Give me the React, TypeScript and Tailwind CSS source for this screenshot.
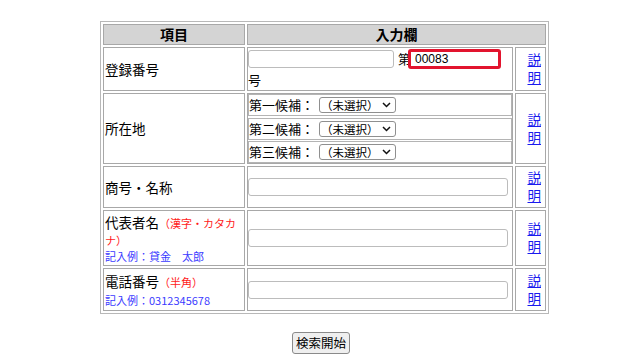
import React from "react";

const F = { fontFamily: '"Noto Sans CJK JP", "Noto Sans", sans-serif' };

function Chevron() {
  return (
    <svg width="9" height="6" viewBox="0 0 9 6" className="ml-auto">
      <path d="M1 1 L4.5 4.5 L8 1" fill="none" stroke="#111" strokeWidth="1.5" />
    </svg>
  );
}

function Pick({ label }: { label: string }) {
  return (
    <div className="flex items-center h-[22px] border border-[#b4b4b4]">
      <span className="text-[13px] leading-[18px] text-black w-[70px]">{label}</span>
      <span className="flex items-center w-[77px] h-[16px] border border-[#8f8f8f] rounded-[3px] bg-white pl-[1px] pr-[4px] text-[11.5px] leading-[14px] text-black">
        （未選択）
        <Chevron />
      </span>
    </div>
  );
}

function Link() {
  return (
    <td className="border border-[#a8a8a8] p-[1px] pr-[4px] text-right align-middle">
      <a href="#" className="inline-block w-[14px] text-[13.5px] leading-[18px] text-[#1a1aee] underline break-all">
        説明
      </a>
    </td>
  );
}

function TextBox() {
  return <div className="w-[260px] h-[18px] border border-[#bcbcbc] rounded-[3px] bg-white" />;
}

export default function App() {
  const td = "border border-[#a8a8a8] p-[1px] align-middle";
  const td2 = "border border-[#a8a8a8] py-[1px] pl-0 pr-[1px] align-middle";
  return (
    <div className="w-[640px] h-[359px] bg-white text-black" style={F}>
      <div className="pt-[21px] pl-[100px]">
        <table className="table-fixed border-separate border-spacing-[2px] border border-[#b8b8b8] w-[449px]">
          <colgroup>
            <col className="w-[142px]" />
            <col className="w-[266px]" />
            <col className="w-[31px]" />
          </colgroup>
          <thead>
            <tr>
              <th className="border border-[#a8a8a8] bg-[#d4d4d4] h-[21px] p-0 text-[14px] leading-[19px] font-bold text-center">項目</th>
              <th colSpan={2} className="border border-[#a8a8a8] bg-[#d4d4d4] h-[21px] p-0 text-[14px] leading-[19px] font-bold text-center">入力欄</th>
            </tr>
          </thead>
          <tbody>
            <tr className="h-[44px]">
              <td className={`${td} text-[13.5px]`}>登録番号</td>
              <td className={td2}>
                <div className="flex items-center h-[20px]">
                  <div className="w-[146px] h-[18px] border border-[#bcbcbc] rounded-[3px] bg-white" />
                  <span className="ml-[4px] text-[13px] leading-[18px]">第</span>
                  <div className="ml-[-3px] w-[93px] h-[20px] border-[3px] border-[#e2142e] rounded-[3px] bg-white flex items-center pl-[4px] text-[12px] font-['Liberation_Sans',sans-serif]">
                    00083
                  </div>
                </div>
                <div className="text-[13px] leading-[19px] mt-[1px]">号</div>
              </td>
              <Link />
            </tr>
            <tr className="h-[71px]">
              <td className={`${td} text-[13.5px]`}>所在地</td>
              <td className="border border-[#a8a8a8] p-0 align-middle">
                <div className="flex flex-col gap-[1.5px]">
                  <Pick label="第一候補：" />
                  <Pick label="第二候補：" />
                  <Pick label="第三候補：" />
                </div>
              </td>
              <Link />
            </tr>
            <tr className="h-[42px]">
              <td className={`${td} text-[13.5px]`}>商号・名称</td>
              <td className={td2}>
                <TextBox />
              </td>
              <Link />
            </tr>
            <tr className="h-[56px]">
              <td className={td}>
                <div className="flex items-baseline leading-[18px] mt-[1px] whitespace-nowrap">
                  <span className="text-[13.5px]">代表者名</span>
                  <span className="text-[11px] text-[#ff1a1a]">（漢字・カタカ</span>
                </div>
                <div className="text-[11px] leading-[16px] text-[#ff1a1a]">ナ）</div>
                <div className="text-[11px] leading-[16px] text-[#3b3bff]">記入例：貸金　太郎</div>
              </td>
              <td className={td2}>
                <TextBox />
              </td>
              <Link />
            </tr>
            <tr className="h-[43px]">
              <td className={td}>
                <div className="flex items-baseline leading-[19px]">
                  <span className="text-[13.5px]">電話番号</span>
                  <span className="text-[11px] text-[#ff1a1a]">（半角）</span>
                </div>
                <div className="text-[11px] leading-[16px] text-[#3b3bff]">記入例：0312345678</div>
              </td>
              <td className={td2}>
                <TextBox />
              </td>
              <Link />
            </tr>
          </tbody>
        </table>
      </div>
      <div className="flex justify-center mt-[18px] pl-[2px]">
        <button className="w-[58px] h-[22px] border border-[#8a8a8a] rounded-[3px] bg-[#efefef] text-[12.5px] leading-[18px] text-black">
          検索開始
        </button>
      </div>
    </div>
  );
}
